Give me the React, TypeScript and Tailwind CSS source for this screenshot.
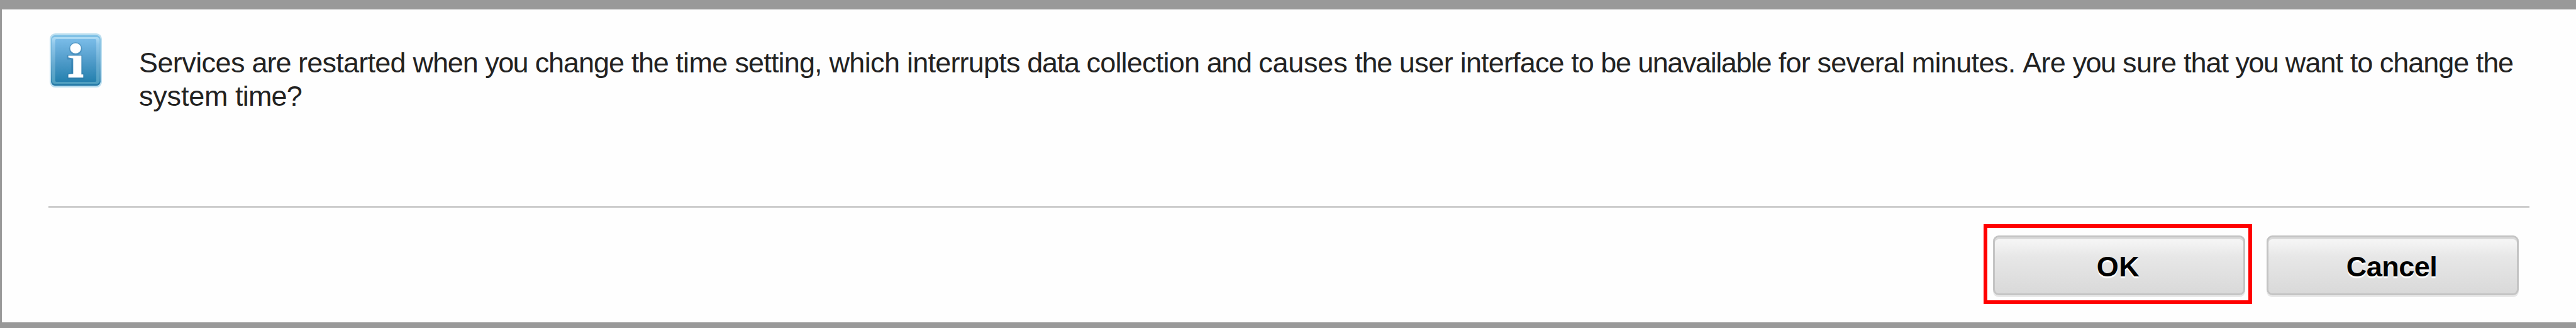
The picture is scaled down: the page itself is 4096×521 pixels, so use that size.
import { Fragment } from "react";

const FONT_SIZE = 45;
const GRID = 2.945;

// Glyph metrics: [advance in grid pixels, advance in 1/2048 em]
const glyphs: Record<string, [number, number]> = {
  a: [8, 1139], b: [8, 1139], c: [8, 1024], d: [8, 1139], e: [8, 1139],
  f: [4, 569], g: [8, 1139], h: [8, 1139], i: [3, 455], l: [3, 455],
  m: [13, 1706], n: [8, 1139], o: [8, 1139], p: [8, 1139], r: [5, 682],
  s: [8, 1024], t: [4, 569], u: [8, 1139], v: [7, 1024], w: [11, 1479],
  y: [7, 1024], S: [10, 1366], A: [10, 1366], ",": [4, 569], ".": [4, 569],
  "?": [8, 1139],
};

function tracking(word: string) {
  let delta = 0;
  for (const ch of word) {
    const [grid, em] = glyphs[ch];
    delta += grid * GRID - (em / 2048) * FONT_SIZE;
  }
  return delta / word.length;
}

function Line({ text }: { text: string }) {
  return (
    <span className="block whitespace-nowrap [word-spacing:-0.85px]">
      {text.split(" ").map((word, i) => (
        <Fragment key={i}>
          {i > 0 && " "}
          <span style={{ letterSpacing: `${tracking(word)}px` }}>{word}</span>
        </Fragment>
      ))}
    </span>
  );
}

function InfoIcon() {
  return (
    <svg viewBox="0 0 28 29" preserveAspectRatio="none" className="h-[86px] w-[83px] shrink-0">
      <defs>
        <linearGradient id="edge" x1="0" y1="0" x2="0" y2="1">
          <stop offset="0" stopColor="#7fc1e6" />
          <stop offset="0.5" stopColor="#68abd2" />
          <stop offset="1" stopColor="#2479a6" />
        </linearGradient>
        <linearGradient id="rim" x1="0" y1="0" x2="0" y2="1">
          <stop offset="0" stopColor="#b0dcf4" />
          <stop offset="0.15" stopColor="#90c7ea" />
          <stop offset="0.6" stopColor="#66aacf" />
          <stop offset="1" stopColor="#4f9fc0" />
        </linearGradient>
        <linearGradient id="face" x1="0" y1="0" x2="0" y2="1">
          <stop offset="0" stopColor="#7abce8" />
          <stop offset="0.45" stopColor="#559fcd" />
          <stop offset="1" stopColor="#2480ae" />
        </linearGradient>
      </defs>
      <rect width="28" height="29" rx="3" fill="#bddff0" />
      <rect x="0.7" y="0.9" width="26.6" height="27.2" rx="2.4" fill="url(#edge)" />
      <rect x="1.2" y="2" width="25.6" height="25" rx="1.5" fill="url(#rim)" />
      <rect x="3" y="3" width="22" height="23" rx="0.6" fill="url(#face)" />
      <g fill="#2a6f9e" opacity="0.35">
        <circle cx="13.9" cy="8.2" r="3.5" />
        <path d="M9.3 11.5h8.2v10h1v3H9.5v-3h2v-7.5H9.3z" />
      </g>
      <ellipse cx="13.9" cy="8" rx="2.9" ry="2.7" fill="#fff" />
      <path d="M10 12h7v10h1v1.7h-8V22l2.6-.3V13.4L10 12.9z" fill="#fff" />
    </svg>
  );
}

const button =
  "h-[95px] w-[401px] rounded-[9px] border-3 border-[#c4c4c4] bg-linear-to-b from-[#f5f5f5] from-5% via-[#e7e7e7] via-35% to-[#d9d9d9] pt-[4px] pr-[3px] text-[45px] leading-[84px] font-bold text-black shadow-[0_3px_0_#e8e8e8,inset_0_3px_0_#dadada] [text-shadow:0_3px_1px_#fff]";

export default function App() {
  return (
    <div className="h-[521px] w-[4096px] overflow-hidden bg-[#999999] pt-[15px] pl-[3px] font-['Liberation_Sans',Arial,sans-serif]">
      <div className="flex h-[497px] flex-col bg-[#fefefe] pr-[74px] pl-[74px]">
        <div className="flex h-[312px] gap-[59px] pt-[38px] pl-[2px]">
          <InfoIcon />
          <p className="pt-[20px] text-[45px] leading-[53px] text-[#222222] [font-kerning:none]">
            <Line text="Services are restarted when you change the time setting, which interrupts data collection and causes the user interface to be unavailable for several minutes. Are you sure that you want to change the" />
            <Line text="system time?" />
          </p>
        </div>
        <div className="h-[3px] shrink-0 bg-[#cccccc]" />
        <div className="flex items-start justify-end gap-[23px] pt-[26px] pr-[17px]">
          <div className="h-[127px] w-[427px] border-6 border-[#ff0000] pt-[12px] pl-[9px]">
            <button className={`${button} block tracking-[0.5px]`}>OK</button>
          </div>
          <button className={`${button} mt-[18px] tracking-[-0.5px]`}>Cancel</button>
        </div>
      </div>
    </div>
  );
}
